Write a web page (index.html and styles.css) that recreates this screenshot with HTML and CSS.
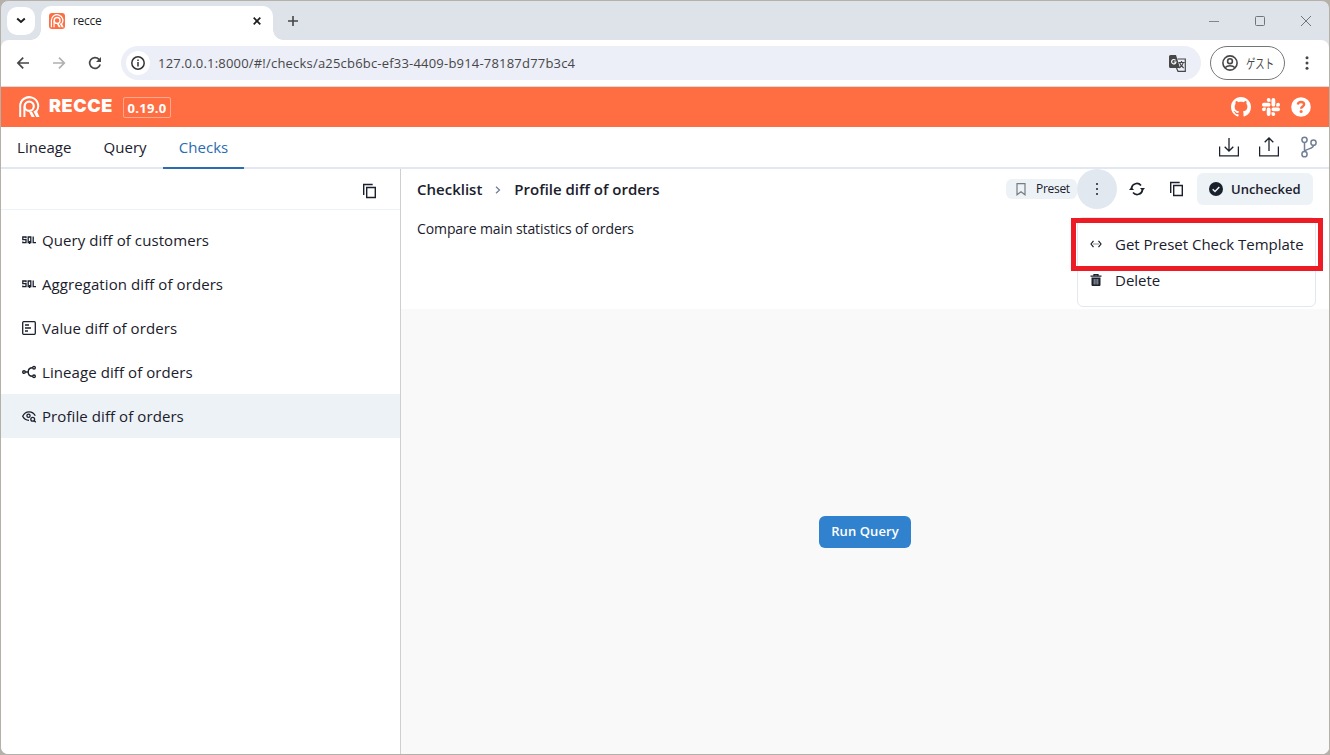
FILE: index.html
```
<!DOCTYPE html>
<html lang="en">
<head>
    <meta charset="UTF-8">
    <meta name="viewport" content="width=device-width, initial-scale=1.0">
    <title>recce</title>
    <link rel="stylesheet" href="styles.css">
</head>
<body>
    <svg class="defs" width="0" height="0">
        <symbol id="logo" viewBox="0 0 22 22">
            <g fill="none" stroke="currentColor">
                <path stroke-width="2" d="M2.200 21V10.200a9 8.800 0 1 1 16 5.300"/>
                <circle stroke-width="2.200" cx="11.200" cy="10.200" r="4.600"/>
                <path stroke-width="2" d="M6.400 21V10.500"/>
            </g>
            <path fill="currentColor" d="M11 15.800h3l2.800 5.200h-3.200zM15.500 15.500l2.800-1.500 3.200 7h-3.200z"/>
        </symbol>
        <symbol id="copy" viewBox="0 0 16 16">
            <path fill="none" stroke="currentColor" stroke-width="1.400" d="M1.700 12V1.500h9M4.700 4.500h8.600v10H4.700z"/>
        </symbol>
        <symbol id="sql" viewBox="0 0 14 8">
            <path fill="none" stroke="currentColor" stroke-width="1.300" d="M4 2.200V1H.8v2.700H4v3H.8V5.500M6.200 1h2.600v5.700H6.200zM7.600 5v3M11.200.400v6.300H14"/>
        </symbol>
    </svg>

    <div class="window">
        <div class="tabstrip">
            <div class="tabsearch">
                <svg width="10" height="7" viewBox="0 0 10 7"><path d="M1.200 1.500L5 5l3.800-3.500" fill="none" stroke="#1f1f1f" stroke-width="2"/></svg>
            </div>
            <div class="tab">
                <span class="favicon"><svg width="14" height="14"><use href="#logo"/></svg></span>
                <span class="tabtitle">recce</span>
                <svg width="8" height="8" viewBox="0 0 8 8"><path d="M.700.700l6.600 6.600M7.300.700L.700 7.300" stroke="#1f1f1f" stroke-width="1.700"/></svg>
            </div>
            <svg class="newtab" width="10" height="10" viewBox="0 0 10 10"><path d="M5 0v10M0 5h10" stroke="#474747" stroke-width="1.600"/></svg>
            <div class="winbtns">
                <svg width="10" height="10"><path d="M0 5.500h10" stroke="#80858b"/></svg>
                <svg width="10" height="10"><rect x=".5" y=".5" width="9" height="9" rx="1" fill="none" stroke="#70757b"/></svg>
                <svg width="10" height="10"><path d="M0 0l10 10M10 0L0 10" stroke="#70757b"/></svg>
            </div>
        </div>

        <div class="toolbar">
            <svg width="14" height="14" viewBox="0 0 14 14"><path d="M13 7H2.500M7.200 1.700L1.900 7l5.300 5.300" fill="none" stroke="#474747" stroke-width="1.700"/></svg>
            <svg width="14" height="14" viewBox="0 0 14 14"><path d="M1 7h11M7 1.700L12.300 7 7 12.300" fill="none" stroke="#b0b0b0" stroke-width="1.700"/></svg>
            <svg width="14" height="14" viewBox="0 0 14 14"><path d="M12.200 8.500A5.400 5.400 0 1 1 11 3.300l1.500 1.500" fill="none" stroke="#474747" stroke-width="1.700"/><path d="M13 1v5H8z" fill="#474747"/></svg>
            <div class="urlbar">
                <span class="info">
                    <svg width="14" height="14" viewBox="0 0 14 14"><circle cx="7" cy="7" r="6.200" fill="none" stroke="#333" stroke-width="1.500"/><path d="M7 6v4.500M7 3.500V5" stroke="#333" stroke-width="1.500"/></svg>
                </span>
                <span class="url">127.0.0.1:8000/#!/checks/a25cb6bc-ef33-4409-b914-78187d77b3c4</span>
                <svg width="17" height="17" viewBox="0 0 17 17">
                    <path d="M1.500 0H7l4 13H1.500A1.500 1.500 0 0 1 0 11.500v-10A1.500 1.500 0 0 1 1.500 0z" fill="#474747"/>
                    <path d="M6.500 5.300A2.200 2.200 0 1 0 7 7H4.800" fill="none" stroke="#fff" stroke-width="1.200"/>
                    <path d="M8.500 4h7.800v12.300H9L7.500 13M9.500 7.500h6M12.500 6v1.500M14.300 7.500c-.5 2.500-2 4-4 5.500M10.700 8c.8 2 2 3.500 4 5" fill="none" stroke="#474747" stroke-width="1.200"/>
                </svg>
            </div>
            <div class="guest">
                <svg width="16" height="16" viewBox="0 0 16 16"><g fill="none" stroke="#474747" stroke-width="1.600"><circle cx="8" cy="8" r="7.100"/><circle cx="8" cy="6.200" r="2.400"/><path d="M3 12.700c2.500-2.700 7.500-2.700 10 0"/></g></svg>
                <span>ゲスト</span>
            </div>
            <svg class="kebab" width="4" height="14" viewBox="0 0 4 14" fill="#474747"><circle cx="2" cy="1.700" r="1.500"/><circle cx="2" cy="7" r="1.500"/><circle cx="2" cy="12.300" r="1.500"/></svg>
        </div>

        <div class="banner">
            <svg class="logo" width="22" height="22"><use href="#logo"/></svg>
            <h1>RECCE</h1>
            <span class="version">0.19.0</span>
            <div class="social">
                <svg width="20" height="20" viewBox="0 0 16 16"><path fill="#fff" d="M8 0C3.580 0 0 3.580 0 8c0 3.540 2.290 6.530 5.470 7.590.4.070.55-.17.55-.38 0-.19-.01-.82-.01-1.490-2.010.37-2.530-.49-2.690-.94-.09-.23-.48-.94-.82-1.130-.28-.15-.68-.52-.01-.53.63-.01 1.080.58 1.230.82.72 1.210 1.870.87 2.330.66.070-.52.28-.87.51-1.070-1.780-.2-3.640-.89-3.640-3.950 0-.87.31-1.590.82-2.150-.08-.2-.36-1.020.08-2.120 0 0 .67-.21 2.200.82.64-.18 1.320-.27 2-.27s1.360.09 2 .27c1.530-1.040 2.200-.82 2.200-.82.44 1.100.16 1.920.08 2.120.51.56.82 1.270.82 2.150 0 3.070-1.870 3.750-3.650 3.950.29.25.54.73.54 1.480 0 1.070-.01 1.930-.01 2.200 0 .21.15.46.55.38A8.010 8.010 0 0 0 16 8c0-4.420-3.580-8-8-8z"/></svg>
                <svg width="18" height="18" viewBox="0 0 24 24"><path fill="#fff" d="M5.042 15.165a2.528 2.528 0 0 1-2.520 2.523A2.528 2.528 0 0 1 0 15.165a2.527 2.527 0 0 1 2.522-2.520h2.520v2.520zM6.313 15.165a2.527 2.527 0 0 1 2.521-2.520 2.527 2.527 0 0 1 2.521 2.520v6.313A2.528 2.528 0 0 1 8.834 24a2.528 2.528 0 0 1-2.521-2.522v-6.313zM8.834 5.042a2.528 2.528 0 0 1-2.521-2.520A2.528 2.528 0 0 1 8.834 0a2.528 2.528 0 0 1 2.521 2.522v2.520H8.834zM8.834 6.313a2.528 2.528 0 0 1 2.521 2.521 2.528 2.528 0 0 1-2.521 2.521H2.522A2.528 2.528 0 0 1 0 8.834a2.528 2.528 0 0 1 2.522-2.521h6.312zM18.956 8.834a2.528 2.528 0 0 1 2.522-2.521A2.528 2.528 0 0 1 24 8.834a2.528 2.528 0 0 1-2.522 2.521h-2.522V8.834zM17.688 8.834a2.528 2.528 0 0 1-2.523 2.521 2.527 2.527 0 0 1-2.520-2.521V2.522A2.527 2.527 0 0 1 15.165 0a2.528 2.528 0 0 1 2.523 2.522v6.312zM15.165 18.956a2.528 2.528 0 0 1 2.523 2.522A2.528 2.528 0 0 1 15.165 24a2.527 2.527 0 0 1-2.520-2.522v-2.522h2.520zM15.165 17.688a2.527 2.527 0 0 1-2.520-2.523 2.526 2.526 0 0 1 2.520-2.520h6.313A2.527 2.527 0 0 1 24 15.165a2.528 2.528 0 0 1-2.522 2.523h-6.313z"/></svg>
                <svg width="20" height="20" viewBox="0 0 20 20"><circle cx="10" cy="10" r="9.800" fill="#fff"/><path d="M6.800 7.500c.3-1.800 1.500-2.500 3.200-2.500 1.800 0 3.100 1 3.100 2.500 0 2-3 2-3 4.300" fill="none" stroke="#ff6e42" stroke-width="2.400"/><circle cx="10.100" cy="14.600" r="1.500" fill="#ff6e42"/></svg>
            </div>
        </div>

        <div class="nav">
            <span class="navitem">Lineage</span>
            <span class="navitem">Query</span>
            <span class="navitem active">Checks</span>
            <div class="navicons">
                <svg width="20" height="20" viewBox="0 0 20 20"><path d="M.6 9.500v9.400h18.800V9.500M10 1v12.500M5.700 9.700l4.300 4.300 4.300-4.300" fill="none" stroke="#1a202c" stroke-width="1.300"/></svg>
                <svg width="20" height="20" viewBox="0 0 20 20"><path d="M.6 9.500v9.400h18.800V9.500M10 14V1.500M5.700 5.300L10 1l4.300 4.300" fill="none" stroke="#1a202c" stroke-width="1.300"/></svg>
                <svg class="branch" width="16" height="22" viewBox="0 0 16 22"><g fill="none" stroke="#718096" stroke-width="1.500"><circle cx="3.500" cy="3.800" r="2.600"/><circle cx="3.500" cy="18.200" r="2.600"/><circle cx="12.500" cy="6.700" r="2.600"/><path d="M3.500 6.400v9.200M12.500 9.300c0 4-7.500 3-8.500 6"/></g></svg>
            </div>
        </div>

        <div class="main">
            <div class="sidebar">
                <div class="sidehead"><svg width="16" height="16"><use href="#copy"/></svg></div>
                <ul class="checklist">
                    <li><svg width="14" height="8"><use href="#sql"/></svg>Query diff of customers</li>
                    <li><svg width="14" height="8"><use href="#sql"/></svg>Aggregation diff of orders</li>
                    <li><svg width="14" height="14" viewBox="0 0 14 14"><g fill="none" stroke="#1a202c" stroke-width="1.300"><rect x=".7" y=".7" width="12.600" height="12.600" rx="1"/><path d="M3 4h4M3 7h6M3 10h3"/></g></svg>Value diff of orders</li>
                    <li><svg width="14" height="14" viewBox="0 0 14 14"><g fill="none" stroke="#1a202c" stroke-width="1.400"><circle cx="2" cy="7" r="1.300"/><circle cx="12" cy="2.700" r="1.300"/><circle cx="12" cy="11.300" r="1.300"/><path d="M3.500 7H6M10.500 2.700C7.500 2.700 6.200 5 6.200 7s1.300 4.300 4.300 4.300"/></g></svg>Lineage diff of orders</li>
                    <li class="selected"><svg width="14" height="14" viewBox="0 0 14 14"><g fill="none" stroke="#1a202c" stroke-width="1.300"><path d="M7 11.300C4 11.300 1.800 9.500.7 7.300 3.500 1.500 10.500 1.500 13.300 6.800"/><circle cx="6.500" cy="6.700" r="1.600"/><circle cx="10.700" cy="10.200" r="1.900"/><path d="M12 11.500l1.800 1.800"/></g></svg>Profile diff of orders</li>
                </ul>
            </div>

            <div class="content">
                <div class="checkhead">
                    <span class="crumb">Checklist</span>
                    <svg class="sep" width="6" height="8" viewBox="0 0 6 8"><path d="M1 .7L4.500 4 1 7.300" fill="none" stroke="#718096" stroke-width="1.300"/></svg>
                    <span class="crumb">Profile diff of orders</span>
                    <div class="actions">
                        <span class="preset"><svg width="10" height="13" viewBox="0 0 10 13"><path d="M1 .7h8v11L5 8.700l-4 3z" fill="none" stroke="#777c85" stroke-width="1.200"/></svg>Preset</span>
                        <span class="more"><svg width="4" height="14" viewBox="0 0 4 14" fill="#1a202c"><circle cx="2" cy="2" r="1"/><circle cx="2" cy="7" r="1"/><circle cx="2" cy="12" r="1"/></svg></span>
                        <svg class="sync" width="16" height="14" viewBox="0 0 16 14"><g fill="none" stroke="#1a202c" stroke-width="1.700"><path d="M2.500 6A5.400 5.400 0 0 1 12 3.500M13.500 8A5.400 5.400 0 0 1 4 10.500"/></g><path d="M0 8h5L2.500 5zM11 6h5l-2.500 3z" fill="#1a202c"/></svg>
                        <svg class="copybtn" width="16" height="16"><use href="#copy"/></svg>
                        <span class="unchecked"><svg width="14" height="14" viewBox="0 0 14 14"><circle cx="7" cy="7" r="7" fill="#1a202c"/><path d="M3.700 7.200L6 9.500l4.300-4.600" fill="none" stroke="#edf2f7" stroke-width="1.500"/></svg>Unchecked</span>
                    </div>
                    <div class="menu">
                        <div class="menuitem"><svg width="12" height="8" viewBox="0 0 12 8"><path d="M3.500.8L1 4l2.500 3.200M8.500.8L11 4 8.500 7.200M3.500 4h1M5.500 4h1M7.500 4h1" fill="none" stroke="#1a202c" stroke-width="1.200"/></svg>Get Preset Check Template</div>
                        <div class="menuitem"><svg width="12" height="12" viewBox="0 0 12 12"><path d="M.5 2.200h11M4 2V.7h4V2" fill="none" stroke="#1a202c" stroke-width="1.300"/><path d="M1.500 3.500h9V11a1 1 0 0 1-1 1h-7a1 1 0 0 1-1-1z" fill="#1a202c"/><path d="M4.200 5v5.500M6 5v5.500M7.800 5v5.500" stroke="#fff" stroke-width=".6"/></svg>Delete</div>
                        <div class="highlight"></div>
                    </div>
                </div>
                <p class="description">Compare main statistics of orders</p>
                <div class="result"><button class="runbtn" type="button">Run Query</button></div>
            </div>
        </div>
    </div>
</body>
</html>
```
FILE: styles.css
```
*{
    box-sizing: border-box;
    margin: 0;
}
body{
    background-color: #b5b0a8;
    color: #1a202c;
    font-family: "Open Sans", "Noto Sans CJK JP", sans-serif;
    font-size: 15px;
    line-height: 24px;
}
svg{
    display: block;
    flex-shrink: 0;
}
.defs{
    position: absolute;
}
.window{
    height: 755px;
    border: 1px solid #b5b0a8;
    border-radius: 8px;
    overflow: hidden;
    background-color: #dee2e9;
    display: flex;
    flex-direction: column;
}

/* browser chrome */
.tabstrip{
    height: 39px;
    display: flex;
    align-items: center;
    padding-left: 6px;
    flex-shrink: 0;
}
.tabsearch{
    width: 28px;
    height: 28px;
    border-radius: 10px;
    background-color: white;
    display: flex;
    align-items: center;
    justify-content: center;
}
.tab{
    position: relative;
    width: 232px;
    height: 34px;
    margin: 5px 0 0 6px;
    padding: 0 12px 4px 8px;
    background-color: white;
    border-radius: 10px 10px 0 0;
    display: flex;
    align-items: center;
}
/* curved feet of the tab */
.tab::before,.tab::after{
    content: "";
    position: absolute;
    bottom: 0;
    width: 10px;
    height: 10px;
}
.tab::before{
    left: -10px;
    background: radial-gradient(circle at 0 0, transparent 9.5px, white 10px);
}
.tab::after{
    right: -10px;
    background: radial-gradient(circle at 100% 0, transparent 9.5px, white 10px);
}
.favicon{
    width: 16px;
    height: 16px;
    border-radius: 3px;
    background-color: #ff6e42;
    color: white;
    display: flex;
    align-items: center;
    justify-content: center;
}
.tabtitle{
    flex: 1;
    margin-left: 8px;
    font-size: 12px;
    letter-spacing: -0.3px;
    color: #1f1f1f;
}
.newtab{
    margin-left: 15px;
}
.winbtns{
    margin-left: auto;
    padding-right: 18px;
    display: flex;
    gap: 36px;
}
.toolbar{
    height: 47px;
    border-bottom: 1px solid #dadce0;
    border-radius: 8px 8px 0 0;
    background-color: white;
    display: flex;
    align-items: center;
    padding-left: 15px;
    gap: 22px;
    flex-shrink: 0;
}
.urlbar{
    width: 1080px;
    height: 34px;
    margin-left: -3px;
    padding: 0 15px 0 5px;
    border-radius: 17px;
    background-color: #eceef8;
    display: flex;
    align-items: center;
}
.info{
    width: 24px;
    height: 24px;
    border-radius: 50%;
    background-color: white;
    display: flex;
    align-items: center;
    justify-content: center;
}
.url{
    flex: 1;
    margin-left: 8px;
    font-size: 13px;
    letter-spacing: 0.2px;
    color: #474747;
}
.guest{
    width: 75px;
    height: 34px;
    margin-left: -13px;
    padding-left: 11px;
    border: 1px solid #747775;
    border-radius: 17px;
    display: flex;
    align-items: center;
    gap: 8px;
    font-size: 13px;
    color: #474747;
}
.guest span{
    transform: scaleX(0.72);
    transform-origin: left;
    white-space: nowrap;
}
.kebab{
    margin-left: -2px;
}

/* app header */
.banner{
    height: 40px;
    background-color: #ff6e42;
    color: white;
    display: flex;
    align-items: center;
    padding-left: 17px;
    flex-shrink: 0;
}
h1{
    width: 64px;
    margin: -2px 0 0 9px;
    font-family: Inter, sans-serif;
    font-size: 18px;
    font-weight: 900;
    letter-spacing: 0.6px;
}
.version{
    width: 48px;
    height: 21px;
    margin-left: 10px;
    border: 1px solid #ffa88e;
    border-radius: 2px;
    font-size: 13px;
    font-weight: 700;
    letter-spacing: 0.3px;
    line-height: 20px;
    text-align: center;
}
.social{
    margin-left: auto;
    padding-right: 18px;
    display: flex;
    align-items: center;
    gap: 11px;
}
.nav{
    height: 42px;
    border-bottom: 2px solid #e2e8f0;
    background-color: white;
    display: flex;
    flex-shrink: 0;
}
.navitem{
    height: 42px;
    padding: 8px 16px;
    letter-spacing: 0.05px;
}
.active{
    color: #2b6cb0;
    border-bottom: 2px solid #2b6cb0;
}
.navicons{
    margin-left: auto;
    padding-right: 12px;
    display: flex;
    align-items: center;
    gap: 20px;
}
.branch{
    margin-left: 2px;
}

/* check list */
.main{
    flex: 1;
    display: flex;
    background-color: white;
}
.sidebar{
    width: 400px;
    border-right: 1px solid #cfcfcf;
}
.sidehead{
    height: 41px;
    border-bottom: 1px solid #edf2f7;
    padding: 14px 22px 0;
    display: flex;
    justify-content: flex-end;
}
.checklist{
    list-style: none;
    padding: 8px 0 0;
}
.checklist li{
    height: 44px;
    padding-left: 21px;
    display: flex;
    align-items: center;
    gap: 6px;
    letter-spacing: 0.08px;
}
.selected{
    background-color: #edf2f7;
}

/* check detail */
.content{
    flex: 1;
    display: flex;
    flex-direction: column;
}
.checkhead{
    position: relative;
    height: 40px;
    padding: 0 16px;
    display: flex;
    align-items: center;
}
.crumb{
    font-size: 15px;
    font-weight: 600;
}
.sep{
    margin: 2px 13px 0;
}
.actions{
    margin-left: auto;
    display: flex;
    align-items: center;
}
.preset{
    height: 20px;
    width: 71px;
    padding-left: 10px;
    border-radius: 6px;
    background-color: #edf2f7;
    display: flex;
    align-items: center;
    gap: 10px;
    font-size: 12px;
    font-weight: 500;
    letter-spacing: -0.3px;
}
.more{
    width: 40px;
    height: 40px;
    border-radius: 50%;
    background-color: #e2e8f0;
    display: flex;
    align-items: center;
    justify-content: center;
}
.sync{
    margin-left: 12px;
}
.copybtn{
    margin-left: 24px;
}
.unchecked{
    width: 116px;
    height: 32px;
    margin-left: 12px;
    padding-left: 12px;
    border-radius: 6px;
    background-color: #edf2f7;
    display: flex;
    align-items: center;
    gap: 8px;
    font-size: 13px;
    font-weight: 600;
}
.menu{
    position: absolute;
    top: 48px;
    right: 13px;
    width: 239px;
    height: 90px;
    padding-top: 8px;
    border: 1px solid #e2e8f0;
    border-radius: 6px;
    background-color: white;
}
.menuitem{
    height: 36px;
    padding-left: 12px;
    display: flex;
    align-items: center;
    gap: 13px;
    white-space: nowrap;
}
.highlight{
    position: absolute;
    top: 0;
    left: -7px;
    width: 252px;
    height: 53px;
    border: 5px solid #ed1c24;
}
.description{
    height: 100px;
    padding: 8px 16px;
    font-size: 14px;
    letter-spacing: -0.1px;
}
.result{
    flex: 1;
    background-color: #f9f9f9;
    display: flex;
    align-items: center;
    justify-content: center;
}
.runbtn{
    width: 92px;
    height: 32px;
    border: none;
    border-radius: 6px;
    padding: 0 0 2px;
    background-color: #3182ce;
    color: white;
    font-family: inherit;
    font-size: 13px;
    font-weight: 600;
    letter-spacing: 0.1px;
}
```
